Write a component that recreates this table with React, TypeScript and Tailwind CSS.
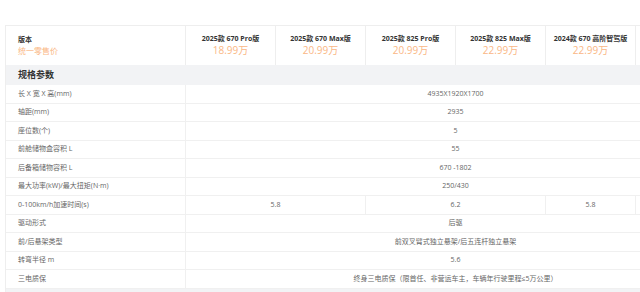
import React from 'react';

type Cell = { v: string; span?: number };
type Row = { label: string; cells: Cell[] };

const models = [
  { name: '2025款 670 Pro版', price: '18.99万' },
  { name: '2025款 670 Max版', price: '20.99万' },
  { name: '2025款 825 Pro版', price: '20.99万' },
  { name: '2025款 825 Max版', price: '22.99万' },
  { name: '2024款 670 高阶智驾版', price: '22.99万' },
  { name: '2024款 825 高阶智驾版', price: '24.99万' },
];

const rows: Row[] = [
  { label: '长 X 宽 X 高(mm)', cells: [{ v: '4935X1920X1700', span: 6 }] },
  { label: '轴距(mm)', cells: [{ v: '2935', span: 6 }] },
  { label: '座位数(个)', cells: [{ v: '5', span: 6 }] },
  { label: '前舱储物盒容积 L', cells: [{ v: '55', span: 6 }] },
  { label: '后备箱储物容积 L', cells: [{ v: '670 -1802', span: 6 }] },
  { label: '最大功率(kW)/最大扭矩(N·m)', cells: [{ v: '250/430', span: 6 }] },
  {
    label: '0-100km/h加速时间(s)',
    cells: [{ v: '5.8', span: 2 }, { v: '6.2', span: 2 }, { v: '5.8' }, { v: '' }],
  },
  { label: '驱动形式', cells: [{ v: '后驱', span: 6 }] },
  { label: '前/后悬架类型', cells: [{ v: '前双叉臂式独立悬架/后五连杆独立悬架', span: 6 }] },
  { label: '转弯半径 m', cells: [{ v: '5.6', span: 6 }] },
  { label: '三电质保', cells: [{ v: '终身三电质保（限首任、非营运车主，车辆年行驶里程≤5万公里）', span: 6 }] },
];

const spanClass: Record<number, string> = {
  1: 'col-span-1',
  2: 'col-span-2',
  6: 'col-span-6',
};

const App = () => {
  return (
    <div
      className="w-[640px] h-[292px] overflow-hidden bg-white"
      style={{ fontFamily: '"Open Sans", "Noto Sans CJK SC", sans-serif' }}
    >
      <div className="pt-[25px] pl-[5px]">
        <div className="w-[721px] border-l border-[#eeeeee]">
          {/* header */}
          <div className="grid grid-cols-[180px_repeat(6,90px)] h-[40px] border-t border-[#eeeeee]">
            <div className="flex flex-col justify-center pl-[12px] border-r border-[#eeeeee]">
              <span className="text-[7px] leading-[10px] font-bold text-[#333]">版本</span>
              <span className="text-[8px] leading-[12px] text-[#fab785]">统一零售价</span>
            </div>
            {models.map((m) => (
              <div
                key={m.name}
                className="flex flex-col justify-center items-center border-r border-[#eeeeee] overflow-hidden"
              >
                <span className="text-[7px] leading-[10px] font-bold text-[#333] whitespace-nowrap">
                  {m.name}
                </span>
                <span className="text-[10px] leading-[13px] text-[#fab785]">{m.price}</span>
              </div>
            ))}
          </div>

          {/* section */}
          <div className="h-[20px] bg-[#f2f3f5] flex items-center pl-[12px]">
            <span className="text-[9px] font-bold text-[#333]">规格参数</span>
          </div>

          {rows.map((r) => (
            <div
              key={r.label}
              className="grid grid-cols-[180px_repeat(6,90px)] h-[18.55px] border-b border-[#f0f0f0] box-border"
            >
              <div className="flex items-center pl-[12px] border-r border-[#f0f0f0]">
                <span className="text-[7px] text-[#666] whitespace-nowrap">{r.label}</span>
              </div>
              {r.cells.map((c, i) => (
                <div
                  key={i}
                  className={`flex items-center justify-center border-r border-[#f0f0f0] ${spanClass[c.span ?? 1]}`}
                >
                  <span className="text-[7px] text-[#666] whitespace-nowrap">{c.v}</span>
                </div>
              ))}
            </div>
          ))}

          <div className="h-[10px] bg-[#f2f3f5]" />
        </div>
      </div>
    </div>
  );
};

export default App;
